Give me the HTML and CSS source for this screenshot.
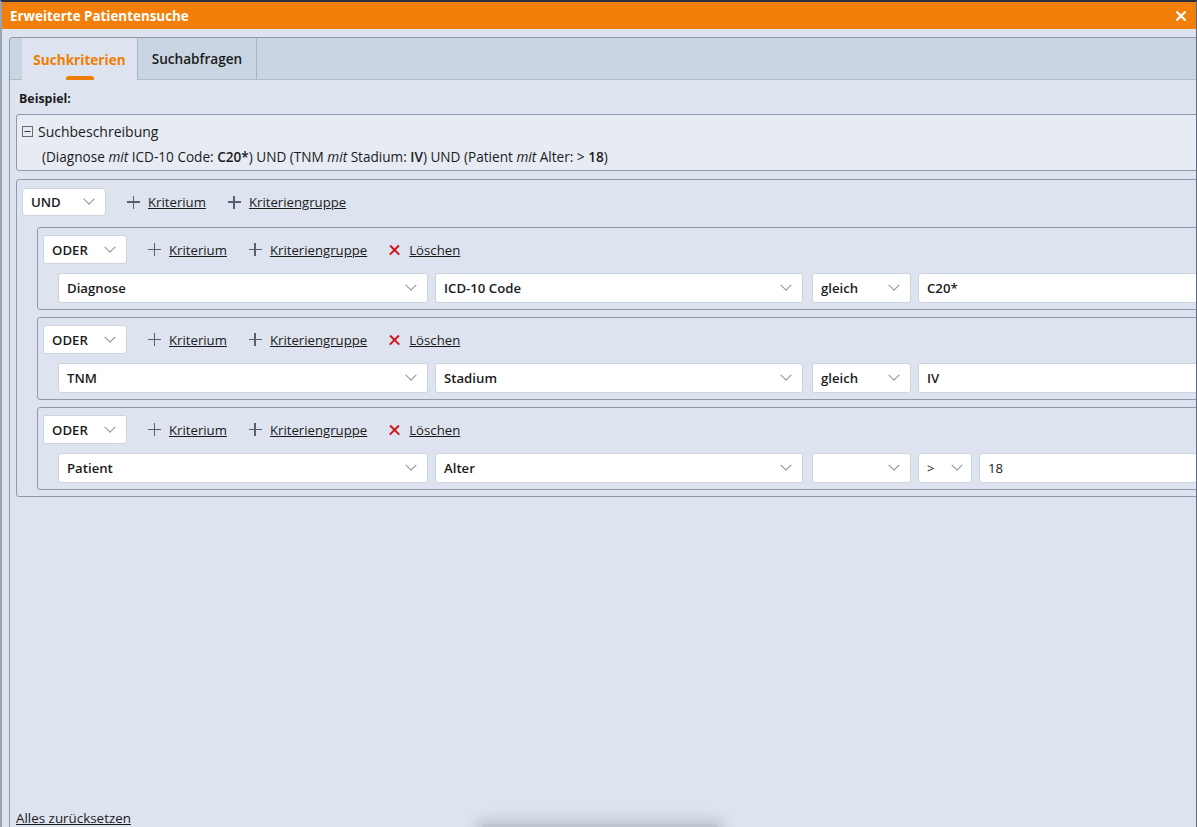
FILE: index.html
```html
<!DOCTYPE html>
<html lang="de">
<head>
  <meta charset="UTF-8">
  <title>Erweiterte Patientensuche</title>
  <link rel="stylesheet" href="styles.css">
</head>
<body>

  <div class="window">
    <div class="titlebar">
      <span>Erweiterte Patientensuche</span>
      <svg class="close" width="12" height="12" viewBox="0 0 12 12"><path d="M1.5 1.5 L10.5 10.5 M10.5 1.5 L1.5 10.5" stroke="#fff" stroke-width="2.2"/></svg>
    </div>

    <div class="content">
      <div class="panel">
        <div class="tabs">
          <div class="tab active">Suchkriterien</div>
          <div class="tab">Suchabfragen</div>
        </div>

        <div class="tab-body">
          <div class="label">Beispiel:</div>

          <!-- Beschreibung -->
          <div class="desc">
            <div class="desc-head">
              <svg width="11" height="11" viewBox="0 0 11 11"><rect x="0.5" y="0.5" width="10" height="10" fill="none" stroke="#6b6b6b"/><path d="M2.5 5.5 H8.5" stroke="#333" stroke-width="1"/></svg>
              Suchbeschreibung
            </div>
            <div class="desc-text">(Diagnose <i>mit</i> ICD-10 Code: <b>C20*</b>) UND (TNM <i>mit</i> Stadium: <b>IV</b>) UND (Patient <i>mit</i> Alter: &gt; <b>18</b>)</div>
          </div>

          <!-- Hauptgruppe -->
          <div class="group main">
            <div class="actions">
              <div class="sel op">UND <span class="chev"></span></div>
              <a class="act"><span class="plus"></span><u>Kriterium</u></a>
              <a class="act"><span class="plus"></span><u>Kriteriengruppe</u></a>
            </div>

            <div class="group sub">
              <div class="actions">
                <div class="sel op">ODER <span class="chev"></span></div>
                <a class="act"><span class="plus"></span><u>Kriterium</u></a>
                <a class="act"><span class="plus"></span><u>Kriteriengruppe</u></a>
                <a class="act"><span class="del"></span><u>Löschen</u></a>
              </div>
              <div class="row">
                <div class="sel w-obj">Diagnose <span class="chev"></span></div>
                <div class="sel w-attr">ICD-10 Code <span class="chev"></span></div>
                <div class="sel w-cmp">gleich <span class="chev"></span></div>
                <div class="inp">C20*</div>
              </div>
            </div>

            <div class="group sub">
              <div class="actions">
                <div class="sel op">ODER <span class="chev"></span></div>
                <a class="act"><span class="plus"></span><u>Kriterium</u></a>
                <a class="act"><span class="plus"></span><u>Kriteriengruppe</u></a>
                <a class="act"><span class="del"></span><u>Löschen</u></a>
              </div>
              <div class="row">
                <div class="sel w-obj">TNM <span class="chev"></span></div>
                <div class="sel w-attr">Stadium <span class="chev"></span></div>
                <div class="sel w-cmp">gleich <span class="chev"></span></div>
                <div class="inp">IV</div>
              </div>
            </div>

            <div class="group sub">
              <div class="actions">
                <div class="sel op">ODER <span class="chev"></span></div>
                <a class="act"><span class="plus"></span><u>Kriterium</u></a>
                <a class="act"><span class="plus"></span><u>Kriteriengruppe</u></a>
                <a class="act"><span class="del"></span><u>Löschen</u></a>
              </div>
              <div class="row">
                <div class="sel w-obj">Patient <span class="chev"></span></div>
                <div class="sel w-attr">Alter <span class="chev"></span></div>
                <div class="sel w-cmp"><span class="chev"></span></div>
                <div class="sel w-gt light">&gt; <span class="chev"></span></div>
                <div class="inp light">18</div>
              </div>
            </div>
          </div>

          <a class="reset">Alles zurücksetzen</a>
        </div>
      </div>
    </div>

    <div class="toast-shadow"></div>
  </div>

</body>
</html>
```

FILE: styles.css
```css
body {
  margin: 0;
  overflow: hidden;
  background: #dee4ef;
  font-family: 'Open Sans', 'Noto Sans', sans-serif;
  color: #1b1b1b;
}

.window {
  position: relative;
  width: 1197px;
  height: 827px;
  box-sizing: border-box;
  border-top: 2px solid #28303f;
  border-left: 2px solid #9aa3b2;
  border-right: 1px solid #5f6979;
  display: flex;
  flex-direction: column;
  overflow: hidden;
}

.titlebar {
  height: 27px;
  flex: none;
  background: #f27f0a;
  color: white;
  font-weight: 700;
  font-size: 13.4px;
  display: flex;
  align-items: center;
  justify-content: space-between;
  padding: 0 8px 0 8px;
}

.close {
  margin-right: 1px;
}

.content {
  flex: 1;
  padding: 8px 0 0 7px;
  overflow: hidden;
  display: flex;
}

.panel {
  flex: 1;
  margin-right: -40px;
  border: 1px solid #8e99aa;
  border-bottom: none;
  border-radius: 4px 0 0 0;
  display: flex;
  flex-direction: column;
}

/* TABS */
.tabs {
  height: 41px;
  flex: none;
  background: #c9d5e2;
  border-bottom: 1px solid #b1bdcc;
  border-radius: 3px 0 0 0;
  padding-left: 12px;
  display: flex;
}

.tab {
  position: relative;
  display: flex;
  align-items: center;
  justify-content: center;
  font-size: 13.6px;
  font-weight: 600;
  padding: 0 10px;
  width: 98px;
  border-right: 1px solid #aab5c4;
}

.tab.active {
  width: 95px;
  background: #dee4ef;
  color: #ef7d00;
  font-weight: 700;
  margin-bottom: -1px;
}

.tab.active::after {
  content: "";
  position: absolute;
  left: 44px;
  bottom: 0;
  width: 28px;
  height: 4px;
  background: #ef7d00;
  border-radius: 3px 3px 0 0;
}

.tab-body {
  flex: 1;
  padding: 0 0 0 6px;
  display: flex;
  flex-direction: column;
}

.label {
  font-size: 12.4px;
  font-weight: 700;
  padding: 10px 0 0 3px;
  height: 24px;
}

/* BESCHREIBUNG */
.desc {
  background: #e6ebf4;
  border: 1px solid #8e9aab;
  border-radius: 3px;
  height: 55px;
  margin-bottom: 8px;
}

.desc-head {
  display: flex;
  align-items: center;
  gap: 5px;
  font-size: 14px;
  padding: 7px 0 0 5px;
}

.desc-text {
  font-size: 13.6px;
  padding: 6px 0 0 25px;
}

.desc-text b {
  font-weight: 600;
}

/* GRUPPEN */
.group {
  border: 1px solid #8e9aab;
  border-radius: 3px;
}

.group.main {
  padding: 8px 0 6px 5px;
}

.group.sub {
  margin: 11px 0 0 15px;
  padding: 7px 0 6px 5px;
}

.group.sub + .group.sub {
  margin-top: 7px;
}

.actions {
  display: flex;
  align-items: center;
}

.group.main > .actions .sel {
  height: 28px;
}

.sel, .inp {
  height: 29px;
  box-sizing: border-box;
  background: white;
  border: 1px solid #cdd4df;
  border-radius: 3px;
  font-size: 13.2px;
  font-weight: 600;
  display: flex;
  align-items: center;
  padding: 0 8px;
  justify-content: space-between;
}

.sel.light, .inp.light {
  font-weight: 400;
}

.op {
  width: 84px;
  margin-right: 21px;
}

.chev {
  width: 7px;
  height: 7px;
  margin-left: auto;
  border-right: 1.3px solid #8a94a3;
  border-bottom: 1.3px solid #8a94a3;
  transform: rotate(45deg) translate(-2px, -2px);
  margin-right: 4px;
}

.act {
  display: flex;
  align-items: center;
  font-size: 13.2px;
  color: #1b1b1b;
  margin-right: 22px;
  cursor: pointer;
}

.plus {
  position: relative;
  width: 13px;
  height: 13px;
  margin-right: 8px;
}

.plus::before, .plus::after {
  content: "";
  position: absolute;
  background: #566070;
}

.plus::before {
  left: 0;
  top: 5.5px;
  width: 13px;
  height: 1.8px;
}

.plus::after {
  left: 5.5px;
  top: 0;
  width: 1.8px;
  height: 13px;
}

.del {
  position: relative;
  width: 11px;
  height: 11px;
  margin-right: 9px;
}

.del::before, .del::after {
  content: "";
  position: absolute;
  left: -1px;
  top: 4.5px;
  width: 13px;
  height: 2.4px;
  background: #d3121a;
}

.del::before {
  transform: rotate(45deg);
}

.del::after {
  transform: rotate(-45deg);
}

.row {
  display: flex;
  gap: 7px;
  margin: 9px 0 0 15px;
}

.row .sel, .row .inp {
  height: 30px;
}

.w-obj { width: 370px; }
.w-attr { width: 368px; }
.w-cmp { width: 99px; margin-left: 2px; }
.w-gt { width: 54px; padding-right: 6px; }

.inp {
  flex: 1;
  justify-content: flex-start;
}

.reset {
  margin-top: auto;
  font-size: 13.4px;
  text-decoration: underline;
  color: #1b1b1b;
  padding-bottom: 0;
  line-height: 18px;
}

.toast-shadow {
  position: absolute;
  left: 478px;
  top: 822px;
  width: 240px;
  height: 30px;
  background: #c0c6d0;
  border-radius: 8px;
  box-shadow: 0 0 12px 6px rgba(160, 168, 182, 0.45);
}
```
